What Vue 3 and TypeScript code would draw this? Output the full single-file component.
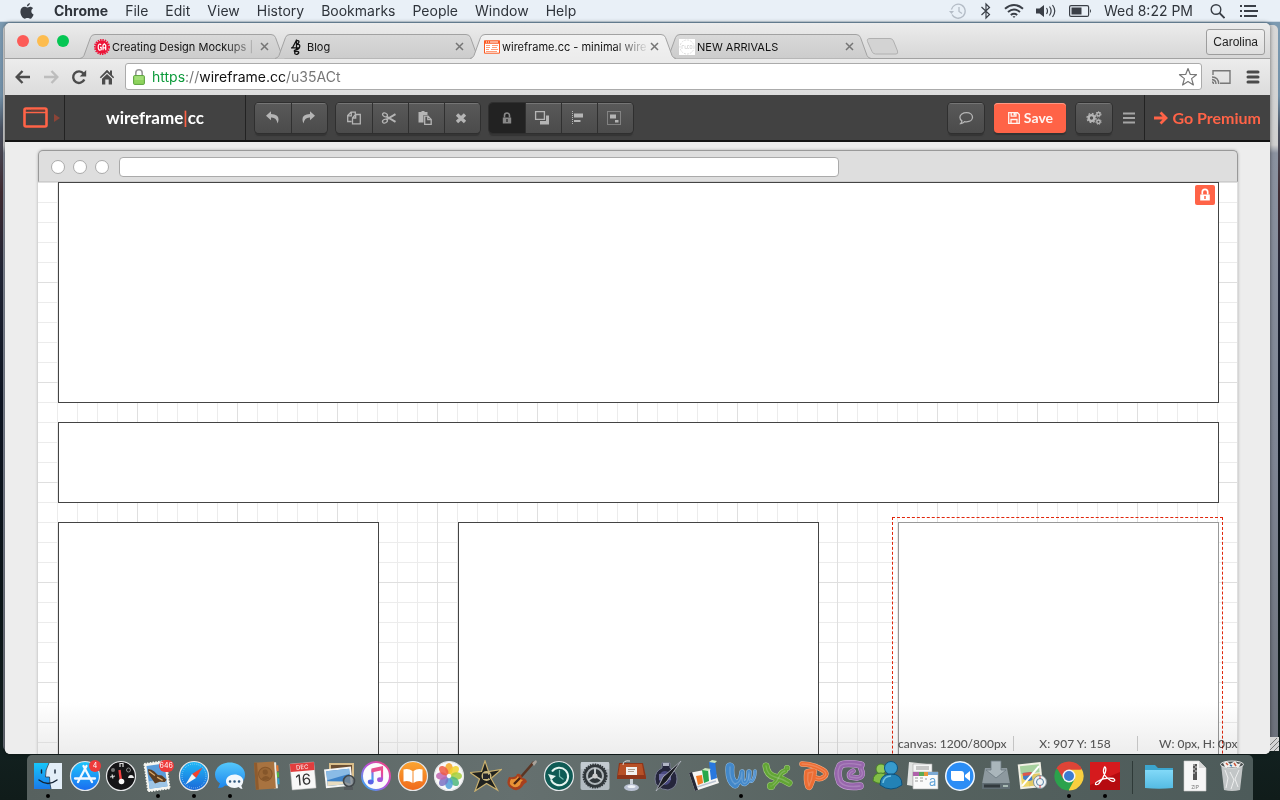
<script setup lang="ts">
interface Tab {
  title: string
  icon: string
  active?: boolean
}
interface Box {
  x: number
  y: number
  w: number
  h: number
  locked?: boolean
  selected?: boolean
}
interface DockItem {
  name: string
  art: string
  running?: boolean
  badge?: string
}

const menus = ['File', 'Edit', 'View', 'History', 'Bookmarks', 'People', 'Window', 'Help']

const tabs: Tab[] = [
  {
    title: 'Creating Design Mockups |',
    icon: '<circle cx="8" cy="8" r="6.6" fill="#ed1438"/><circle cx="8" cy="8" r="7.1" fill="none" stroke="#ed1438" stroke-width="1.8" stroke-dasharray="1.5 .9"/><path d="M7.2 5.600Q4.200 4 4.200 8T7.200 10.800V8.400H6M9 11.200V6.300L10.300 4.800 11.700 6.300v4.900M9 8.800h2.700" stroke="#fff" stroke-width="1.2" fill="none"/>',
  },
  {
    title: 'Blog',
    icon: '<path d="M7.500 .5V11M3.500 8.800L7.300 1.500M2 8.800H10M7.500 1.300Q10.800 1.500 9.600 3.800 9 5 7.500 5.200 11.500 5 10.600 8 10 10.500 6.500 10.800 4.800 11.500 5.600 12.500 10.500 12 9.600 14.200 8.500 16 6.300 15 5 13.800 6.500 12.800" stroke="#111" stroke-width="1.300" fill="none"/>',
  },
  {
    title: 'wireframe.cc - minimal wire',
    icon: '<path d="M.5 2h15v12.200H.5z" fill="#fff" stroke="#fb5a22"/><path d="M0 1.500h16v3.200H0z" fill="#fb5a22"/><path d="M2 3h1m1 0h1m1 0h8" stroke="#fff"/><path d="M2 6.500h4M8 6.500h6M2 8.500h4M8 8.500h5M2 10.500h3M7 10.500h7M2 12.500h11" stroke="#ff9c78"/>',
    active: true,
  },
  {
    title: 'NEW ARRIVALS',
    icon: '<path d="M0 0h16v16H0z" fill="#fff"/><circle cx="8" cy="8" r="7" fill="none" stroke="#ddd" stroke-dasharray="2 1"/><path d="M3 10V6.500h2M6 6.500V9.500h2M10 6.500H8.500v3H10M11 6.500h2v3h-2z" stroke="#ddd" fill="none"/>',
  },
]

const boxes: Box[] = [
  { x: 20, y: 0, w: 1161, h: 221, locked: true },
  { x: 20, y: 240, w: 1161, h: 81 },
  { x: 20, y: 340, w: 321, h: 321 },
  { x: 420, y: 340, w: 361, h: 321 },
  { x: 860, y: 340, w: 321, h: 321, selected: true },
]

const editGroups = [
  [
    { label: 'Undo', art: '<path d="M6 1.200L1 5.700 6 10.200V7.400Q11.400 7 12.600 13.400 16.200 4.200 6 4z"/>' },
    { label: 'Redo', art: '<path d="M10 1.200L15 5.700 10 10.200V7.400Q4.600 7 3.400 13.400-.2 4.200 10 4z"/>' },
  ],
  [
    {
      label: 'Copy',
      art: '<path d="M5.500 11.500H1.700V5.500L5 2.200h4.300V4M5.300 2.500v3.300H2M6.500 8l3-3.500h4.800v9.300H6.500zM9.700 4.800V8H6.800" fill="none" stroke="currentColor" stroke-width="1.300"/>',
    },
    {
      label: 'Cut',
      art: '<path d="M5.500 6.500L14.500 11.800M5.500 9.500L14.500 4.200" stroke="currentColor" stroke-width="2"/><ellipse cx="3.900" cy="4.900" rx="2.500" ry="1.800" fill="none" stroke="currentColor" stroke-width="1.300" transform="rotate(25 4 5)"/><ellipse cx="3.900" cy="11.100" rx="2.500" ry="1.800" fill="none" stroke="currentColor" stroke-width="1.300" transform="rotate(-25 4 11)"/>',
    },
    {
      label: 'Paste',
      art: '<path d="M1.500 2h3V1h3v1h3v3H6.500v7.500h-5z"/><path d="M7.700 6.200h3.300l3.200 3.200v5H7.700zM10.800 6.500v3.200H14" fill="none" stroke="currentColor" stroke-width="1.300"/>',
    },
    { label: 'Delete', art: '<path d="M4 4.500l8 7.500M12 4.500L4 12" stroke="currentColor" stroke-width="3.400"/>' },
  ],
  [
    {
      label: 'Lock',
      art: '<path d="M3.800 7.500h8.400v6H3.800z"/><path d="M5.500 7.500V5.500a2.500 2.500 0 015 0v2" fill="none" stroke="currentColor" stroke-width="1.600"/><path d="M8 9v3" stroke="#222" stroke-width="1.200"/>',
      active: true,
    },
    {
      label: 'Arrange',
      art: '<path d="M1.600 1.600h8.800v7.800H1.600z" fill="none" stroke="currentColor" stroke-width="1.300"/><path d="M12 5.500h3v9H6V11h6z"/>',
    },
    {
      label: 'Align',
      art: '<path d="M2.500 1v14" stroke="currentColor" stroke-dasharray="1 1"/><path d="M4 3.500h9v4H4zM4 10h6.500v2H4z"/>',
    },
    {
      label: 'Group',
      art: '<path d="M1.500 1.500h13v13h-13z" fill="none" stroke="currentColor" stroke-dasharray="1 1"/><path d="M4 4.500h6v4H4zM9 10h3.500v2.500H9z"/>',
    },
  ],
]

/* Glassy tube letter: each stroke is [path, width], edged in a paler tone. */
const tube = (strokes: [string, number][], fill: string, edge: string) =>
  `<g fill="none" stroke-linecap="round" stroke-linejoin="round">` +
  strokes.map(([d, w]) => `<path d="${d}" stroke="${edge}" stroke-width="${w + 1}"/>`).join('') +
  strokes.map(([d, w]) => `<path d="${d}" stroke="${fill}" stroke-width="${w}"/>`).join('') +
  strokes.map(([d]) => `<path d="${d}" stroke="#fff" stroke-opacity=".18" stroke-width="1.300"/>`).join('') +
  `</g>`

const petals = ['#f6a623', '#f2d22e', '#a5cf3c', '#4fb77d', '#4f9fd8', '#7a72c4', '#c065b0', '#ee5a45']
  .map((c, i) => `<ellipse cx="16" cy="8.500" rx="3.800" ry="5.500" fill="${c}" fill-opacity=".85" transform="rotate(${i * 45} 16 16)"/>`)
  .join('')

const ring = (fill: string) => `<circle cx="16" cy="16" r="14.500" fill="${fill}" stroke="#e4e6e8" stroke-width="1.200"/>`

const dockApps: DockItem[] = [
  {
    name: 'Finder',
    running: true,
    art: '<path d="M2 3h28v26H2z" fill="#e3eef8"/><path d="M2 3h15q-4 7-3.500 14h4q0 6 1.500 12H2z" fill="url(#g-finder)"/><path d="M17 3q-4 7-3.500 14h4q0 6 1.500 12" fill="none" stroke="#26384d" stroke-width=".8"/><path d="M9.500 10v3M23 10v3M7 20q9 7 18 0" fill="none" stroke="#132233" stroke-width="1.400" stroke-linecap="round"/>',
  },
  {
    name: 'App Store',
    badge: '4',
    art: ring('url(#g-blue)') + '<path d="M17.500 6L9 22M14.500 6L23 22M6 18.500h20" stroke="#f1f8ff" stroke-width="2.300" stroke-linecap="round"/>',
  },
  {
    name: 'Dashboard',
    art: ring('#151517') + '<path d="M14.500 10l1.500 11" stroke="#f24040" stroke-width="2.400"/><circle cx="16.500" cy="21.500" r="2.800" fill="#f7f7f7"/><path d="M15 7V3.500h3V7M5 17l5-1M7 14.500l1 4" stroke="#ddd" stroke-width="1.200" fill="none"/><circle cx="8" cy="10" r="2" fill="#777"/><circle cx="23.500" cy="10" r="2" fill="none" stroke="#888"/><path d="M23 18h6q-.5-3-3-3t-3 3z" fill="#eee"/>',
  },
  {
    name: 'Mail',
    running: true,
    badge: '646',
    art: '<g transform="rotate(-8 16 16)"><path d="M4 2h22v28H4z" fill="#f5f5f0" stroke="#f5f5f0" stroke-width="1.600" stroke-dasharray="1.600 1.200"/><path d="M6 4.500h18v23H6z" fill="#5b9cda"/><path d="M6 20h18v7.500H6z" fill="#9dc5e6"/><path d="M7 8q3 0 6 3l3 4 4 1 4 5-2 2-5-1-5 1-2-4-3-6z" fill="#5c3d20"/><path d="M8 10l5 5M15 17l5 4" stroke="#d9a968" stroke-width="1.300"/></g>',
  },
  {
    name: 'Safari',
    running: true,
    art: ring('url(#g-safari)') + '<circle cx="16" cy="16" r="12" fill="none" stroke="#bfe4fb" stroke-dasharray=".6 1.500"/><path d="M24.500 7.500L14 14l4 4z" fill="#f3432f"/><path d="M7.500 24.500L14 14l4 4z" fill="#f4f4f4"/>',
  },
  {
    name: 'Messages',
    running: true,
    art: '<path d="M16 2.500C7 2.500 1 8 1 14.500c0 4 2 7 5 9L4 28q5 0 7-2.500 20 2 20-11c0-7-7-12-15-12z" fill="url(#g-sky)"/><path d="M20.500 14.500c-5 0-8.500 3-8.500 6.800s3.500 6.700 8.500 6.700q2 0 4-1 2 2 4 2l-1.200-3.200c5-6.800-.8-11.300-6.800-11.300z" fill="#f2f7fc"/><path d="M16 21.500h.1M20.500 21.500h.1M25 21.500h.1" stroke="#31597f" stroke-width="2.500" stroke-linecap="round"/>',
  },
  {
    name: 'Contacts',
    art: '<g transform="rotate(-4 16 16)"><path d="M22 3h4v26h-4z" fill="#ecebe5"/><path d="M26 6h2v6h-2z" fill="#e8772e"/><path d="M26 13h2v5h-2z" fill="#55b83e"/><path d="M26 19h2v6h-2z" fill="#32a3cf"/><path d="M4 2h20v27H4z" fill="#a87340"/><path d="M4 2h3v27H4z" fill="#8e5b2d"/><circle cx="14.500" cy="14" r="6.800" fill="#9a6736" stroke="#85562a"/><circle cx="14.500" cy="12" r="2.600" fill="#85562a"/><path d="M10 18.500q4.500-5 9 0-4.500 3-9 0z" fill="#85562a"/></g>',
  },
  {
    name: 'Calendar',
    art: '<g transform="rotate(-5 16 16)"><path d="M4 3h24v26H4z" fill="#f8f8f8" stroke="#bbb" stroke-width=".5"/><path d="M4 3h24v8H4z" fill="#e23d3d"/><text x="16" y="9.200" font-size="6" fill="#fff" text-anchor="middle">DEC</text><text x="16" y="25" font-size="15" fill="#333" text-anchor="middle">16</text></g>',
  },
  {
    name: 'Preview',
    art: '<path d="M5 3h25v17H5z" fill="#d8bd8a"/><path d="M7 5h21v13H7z" fill="#6a4d32"/><g transform="rotate(-6 14 18)"><path d="M1 8h27v19H1z" fill="#f5f5f5"/><path d="M3 10h23v15H3z" fill="#3e83c9"/><path d="M3 10h23v5l-23 4z" fill="#8abbe6"/><path d="M3 20l16 2 7 3H3z" fill="#e9dcc0"/></g><circle cx="25" cy="21" r="5.500" fill="#7b848d" fill-opacity=".8" stroke="#42474b" stroke-width="1.600"/><path d="M20 27h9v3h-9z" fill="#54595c"/>',
  },
  {
    name: 'iTunes',
    art: '<circle cx="16" cy="16" r="14" fill="#fbfbfd" stroke="url(#g-itunes)" stroke-width="2"/><path d="M12.500 22V10.500l9.500-2v11" fill="none" stroke="url(#g-itunes)" stroke-width="2.200"/><path d="M11.500 8.500L23 6v4L11.500 12.500z" fill="#e8508f"/><ellipse cx="10.700" cy="22" rx="2.900" ry="2.400" fill="#5963e8"/><ellipse cx="20" cy="19.700" rx="2.900" ry="2.400" fill="#a058da"/>',
  },
  {
    name: 'iBooks',
    art: ring('url(#g-orange)') + '<path d="M15.500 11q-4-3-9-1.500v12q5-1.500 9 1.500zM16.500 11q4-3 9-1.500v12q-5-1.500-9 1.500z" fill="#fff"/>',
  },
  { name: 'Photos', art: ring('#f8f8f8') + petals },
  {
    name: 'iMovie',
    art: '<path d="M15 1l3.500 10.500 13-2-10.500 9 6.500 11.500-11-6.500L5 31l4.500-12L0 12.500l11.500-1z" fill="#20221f" stroke="#c9b06e" stroke-width="1.200"/><circle cx="16.500" cy="16" r="5" fill="#c9b77f"/><path d="M13 13.500h5v1.500l2-1v5l-2-1v1h-5z" fill="#25262a"/>',
  },
  {
    name: 'GarageBand',
    art: '<path d="M14 18L28 2" stroke="#5b3523" stroke-width="2.600"/><path d="M26 3l4-3 1 2-3 4z" fill="#aaa39b"/><path d="M3 17q-4 8 2 11 6 5 11-1 1-3 5-5-1-4-5-4-1-5-5-4-1 4-8 3z" fill="#a8401d"/><path d="M5 19q-3 5 1 7 4 3 8-1 0-3 3-5-4-1-5-4-2 4-7 3z" fill="#e89235"/><path d="M8 24l6-6" stroke="#4b2413" stroke-width="2.400"/>',
  },
  {
    name: 'Time Machine',
    art: ring('#0f5b55') + '<path d="M8 19.500a8.800 8.800 0 101-8" fill="none" stroke="#e5f4f0" stroke-width="2"/><path d="M5 14l3 6 5-4z" fill="#e5f4f0"/><path d="M16.500 10v6.500l4 3" stroke="#75b9ae" stroke-width="1.200" fill="none"/>',
  },
  {
    name: 'System Preferences',
    art: '<rect x="1.500" y="2" width="29" height="28" rx="2" fill="#b3bbc1"/><path d="M2 2h28v7H2z" fill="#cbd2d7" fill-opacity=".7"/><circle cx="16" cy="16" r="11.500" fill="#30363a"/><circle cx="16" cy="16" r="11.800" fill="none" stroke="#30363a" stroke-width="1.500" stroke-dasharray="1.500 1"/><circle cx="16" cy="16" r="8" fill="none" stroke="#afb6ba" stroke-width="2"/><path d="M16 16V8M16 16l7 4M16 16l-7 4" stroke="#c5cbce" stroke-width="2"/><circle cx="16" cy="16" r="2.600" fill="#ccc"/>',
  },
  {
    name: 'Keynote',
    art: '<path d="M15 18h3v9h-3z" fill="#c6ced5"/><ellipse cx="16.500" cy="27.500" rx="7.500" ry="3.500" fill="#b9c1d2"/><ellipse cx="16.500" cy="26.500" rx="4" ry="1.500" fill="#edf1f7"/><path d="M4 3h24l3 14v2H2v-2z" fill="#8e3519"/><path d="M5 4h22l2 11H3z" fill="#b75127"/><path d="M11 7h11v8H11z" fill="#f1f1ef"/><path d="M13 9.500h7M13 11.500h6" stroke="#ae9c8e"/><path d="M8 5q0-5 7-4" stroke="#ddd" fill="none"/>',
  },
  {
    name: 'Pages',
    art: '<path d="M10 3h8v5q7 3 7 11 0 9-9 11-13-1-13-11 0-8 7-11z" fill="#25263c" stroke="#777b91"/><path d="M11 3h6v3h-6z" fill="#b1b6c5"/><ellipse cx="13" cy="18" rx="6" ry="7" fill="#4b4a82"/><path d="M7 14h12v6H7z" fill="#6c6ba0"/><path d="M29 1L15 21 4 31l7-14z" fill="#1a1b22" stroke="#aeb2bb" stroke-width=".9"/>',
  },
  {
    name: 'Numbers',
    art: '<path d="M1 13l25-5 5 15-24 8z" fill="#f5f5f3"/><path d="M1 13l3-1 6 18-3 1z" fill="#242735"/><path d="M8 16l6-1 1 8-5 2z" fill="#f37b25"/><path d="M14 10l6-1 1 12-5 2z" fill="#27a84b"/><path d="M21 2l6-1 2 17-6 2z" fill="#2878df"/><path d="M14 10l3-2 6 1-3 2zM21 2l3-2 5 1-2 2z" fill="#cce6bd"/><path d="M9 27l19-6" stroke="#bac4d2" stroke-width="1.500"/>',
  },
  {
    name: 'Word',
    running: true,
    art: tube([['M5 7Q4 20 10 24', 8], ['M10 24Q16 23 17 12M17 14Q16 24 20 23.500 24 22 24 12', 4.5], ['M24 14Q23 23 27 21 30 18 30 11', 2.500]], '#4388c9', '#94bfe4'),
  },
  {
    name: 'Excel',
    art: tube([['M5 6Q6 15 14 17T28 23', 6], ['M12 25Q16 22 18 17T24 11', 4.500], ['M26 8h.1', 5], ['M10 26h.1', 7]], '#62a535', '#a5d080'),
  },
  {
    name: 'PowerPoint',
    art: tube([['M4 4Q14 4 23 9 31 13 26 17 22 20 18 18', 4.500], ['M10 13L15 12Q14 20 11 26Q9 20 10 13', 7]], '#ec6d33', '#f5b088'),
  },
  {
    name: 'Entourage',
    art: tube([['M27 5Q10 2 6 6 2 13 6 22 11 28 26 26', 6.500], ['M27 9Q31 17 23 18L16 17Q14 13 19 11', 4.500]], '#9766ac', '#c8a6d6'),
  },
  {
    name: 'Messenger',
    art: '<circle cx="10" cy="9" r="5" fill="#91c958" stroke="#477e28"/><path d="M2 21q0-8 8-8 6 0 7 8-7 5-15 0z" fill="#82bd47" stroke="#477e28"/><circle cx="20" cy="8" r="6.500" fill="#379bcd" stroke="#0d527d"/><path d="M9 25q0-11 11-11t11 11q-11 8-22 0z" fill="#2382b6" stroke="#0d527d"/><path d="M12 23q1-7 8-7" fill="none" stroke="#73c1e2" stroke-width="1.500"/>',
  },
  {
    name: 'Document Connection',
    art: '<path d="M2 2l18 2-2 24-18-3z" fill="#e1e3e2"/><path d="M6 4h19v24H6z" fill="#f4f5f5" stroke="#aaa" stroke-width=".6"/><path d="M6 12h25v17H6z" fill="#fafafa" stroke="#aaa" stroke-width=".6"/><path d="M6 12h6v4H6z" fill="#b063ab"/><path d="M12 12h5v4h-5z" fill="#5aaa54"/><path d="M17 12h4v4h-4z" fill="#e79639"/><path d="M21 12h10v3H21z" fill="#7ba9d4"/><text x="22" y="26" font-size="13" fill="#66a5d8">a</text><path d="M8 18h3M8 21h3M13 18h3M13 21h3M18 19h2M9 7h13M9 9h13" stroke="#999"/>',
  },
  {
    name: 'Zoom',
    art: '<circle cx="16" cy="16" r="15" fill="#f2f8ff"/><circle cx="16" cy="16" r="13.500" fill="#2c8df5"/><path d="M7 11h10q3 0 3 3v7H10q-3 0-3-3zM21 15l5-4v10l-5-4z" fill="#fff"/>',
  },
  {
    name: 'Installer',
    art: '<path d="M5 8h22l3 16H2z" fill="#8d999f"/><path d="M2 23h28v6H2z" fill="#606d73"/><path d="M4 24.500h16v3H4z" fill="#323a3e"/><path d="M11 1h10v9h5L16 18 6 10h5z" fill="#aab6bb" stroke="#6c7a81" stroke-width=".8"/><path d="M23 26h5" stroke="#c1d4ca" stroke-width="1.500"/>',
  },
  {
    name: 'Travel',
    art: '<g transform="rotate(-6 16 16)"><path d="M3 3h23v25H3z" fill="#f1f0e5"/><path d="M5 5h19v8H5z" fill="#a7d19f"/><path d="M5 13h8v13H5z" fill="#efd86b"/><path d="M12 14h12v12H12z" fill="#e2c965"/><path d="M7 12h9v8q-5 2-9-2z" fill="#457fc4"/><path d="M7 12h9v3H7z" fill="#de594b"/><path d="M5 25L24 7" stroke="#fff" stroke-width="2"/></g><circle cx="24" cy="22" r="6.500" fill="#f0f4f5" stroke="#829199"/><circle cx="24" cy="22" r="3.500" fill="none" stroke="#5681a6"/><path d="M24 16v3M24 25v3" stroke="#df4444"/>',
  },
  {
    name: 'Google Chrome',
    running: true,
    art: '<path d="M16 16L3.400 8.700A14.500 14.500 0 0128.600 8.700z" fill="#de4437"/><path d="M16 16L28.600 8.700A14.500 14.500 0 0116 30.500z" fill="#f9cf3f"/><path d="M16 16v14.500A14.500 14.500 0 013.400 8.700z" fill="#2ba24c"/><path d="M16 9.500h12.900L22 19.500z" fill="#f9cf3f"/><path d="M16 9.500h12.900L27 6H12z" fill="#de4437"/><path d="M10.400 19.200L4 8l7-2 5 3z" fill="#de4437"/><path d="M21.600 19.200L15.500 30.500l-6-12z" fill="#2ba24c"/><circle cx="16" cy="16" r="6.500" fill="#f3f5f6"/><circle cx="16" cy="16" r="5" fill="#3c7bd0"/>',
  },
  {
    name: 'Adobe Reader',
    running: true,
    art: '<path d="M1 2h30v28H1z" fill="#b60b10"/><path d="M1 2h30v10L1 25z" fill="#d51a1d"/><path d="M15.500 7c3 0 1 9-6 17-4 2-4-1-1-2.500 5-3 10-4 16-3 3 2 0 4-3 2-5-3-9-8-6-13.500z" fill="none" stroke="#fff" stroke-width="1.300"/>',
  },
]

const dockFiles: DockItem[] = [
  {
    name: 'Documents',
    art: '<path d="M2 5h10l3 3h15v20H2z" fill="#3ca6cf"/><path d="M2 10h28v18q-14 1.500-28 0z" fill="url(#g-folder)"/>',
  },
  {
    name: 'Archive',
    art: '<path d="M5 1h15l7 7v23H5z" fill="#f6f6f6" stroke="#ccc" stroke-width=".6"/><path d="M20 1v7h7z" fill="#d8d8d8"/><path d="M14 4h4v16h-4z" fill="#555"/><path d="M14 5h2M16 7h2M14 9h2M16 11h2M14 13h2" stroke="#ddd"/><text x="16" y="29" font-size="5" fill="#777" text-anchor="middle">ZIP</text>',
  },
  {
    name: 'Trash',
    art: '<path d="M5 4h22l-3 26q-8 2-16 0z" fill="#cfd2d3" fill-opacity=".9"/><ellipse cx="16" cy="4.500" rx="11.500" ry="3.500" fill="#4b5151" stroke="#e7e8e8"/><path d="M7 3l4-2 3 3 5-3 3 3 3-1-2 4H9z" fill="#f0efed"/><path d="M10 3l2 2M18 3l2 3" stroke="#ca573c" stroke-width="1.500"/><path d="M14 5l2 1" stroke="#3979ac" stroke-width="1.500"/><path d="M9 10l3 8-2 10M23 10l-4 9 3 8M14 12l4 8-3 9" fill="none" stroke="#f8f8f8" stroke-opacity=".8"/>',
  },
]
</script>

<template>
  <div class="desktop">
    <svg class="defs" width="0" height="0" aria-hidden="true">
      <defs>
        <linearGradient id="g-finder" x2="0" y2="1"><stop stop-color="#16c6fb" /><stop offset="1" stop-color="#1b7ae8" /></linearGradient>
        <linearGradient id="g-blue" x2="0" y2="1"><stop stop-color="#1ec6fb" /><stop offset="1" stop-color="#1a6cf0" /></linearGradient>
        <linearGradient id="g-safari" x2="0" y2="1"><stop stop-color="#1fb9f7" /><stop offset="1" stop-color="#1b67d8" /></linearGradient>
        <linearGradient id="g-sky" x2="0" y2="1"><stop stop-color="#55c8fb" /><stop offset="1" stop-color="#1c86ee" /></linearGradient>
        <linearGradient id="g-orange" x2="0" y2="1"><stop stop-color="#fba532" /><stop offset="1" stop-color="#f0691b" /></linearGradient>
        <linearGradient id="g-itunes" x1="1" x2="0" y2="1"><stop stop-color="#fb4476" /><stop offset=".5" stop-color="#b551dc" /><stop offset="1" stop-color="#22b8f8" /></linearGradient>
        <linearGradient id="g-folder" x2="0" y2="1"><stop stop-color="#82d9f8" /><stop offset="1" stop-color="#54bbe3" /></linearGradient>
        <linearGradient id="g-tab" x2="0" y2="1"><stop stop-color="#d9d9d9" /><stop offset="1" stop-color="#cccccc" /></linearGradient>
        <linearGradient id="g-tab-on" x2="0" y2="1"><stop stop-color="#f2f2f2" /><stop offset="1" stop-color="#ececec" /></linearGradient>
      </defs>
    </svg>

    <header class="menubar">
      <svg class="apple" viewBox="0 0 14 16" width="14" height="16"><path d="M9.900 0c.1 1.700-1.400 3.400-3 3.400C6.700 1.800 8.300.2 9.900 0zM7.200 4.500c.7 0 1.500-.8 3-.8 1 0 2.100.5 2.800 1.500-2.600 1.700-2 5.100.6 6.200-.6 1.800-2 4.300-3.400 4.300-1 0-1.400-.6-2.700-.6s-1.800.6-2.700.6C2.900 15.700.4 12.300.4 8.800.4 5.500 2.500 3.800 4.400 3.800c1.200 0 2 .7 2.800.7z" fill="#3a3f47" /></svg>
      <nav class="menus">
        <a href="#" class="app-name">Chrome</a>
        <a v-for="m in menus" :key="m" href="#">{{ m }}</a>
      </nav>
      <div class="tray">
        <svg width="20" height="18" viewBox="0 0 20 18" fill="none" stroke="#b4bcc6" stroke-width="1.300"><path d="M4 12.500a7 7 0 10-.6-5M11 5v4.500l3 2" /><path d="M1 9h5L3.500 12z" fill="#b4bcc6" stroke="none" /></svg>
        <svg width="12" height="18" viewBox="0 0 12 18" fill="none" stroke="#3a3f47" stroke-width="1.200"><path d="M1.500 5l8 7.500-3.500 3.500V2l3.500 3.500-8 7.500" /></svg>
        <svg width="20" height="18" viewBox="0 0 20 18" fill="none" stroke="#3a3f47" stroke-width="2"><path d="M1 6.700q9-7.500 18 0M4 10q6-5 12 0M6.800 13q3.200-2.500 6.400 0" /><path d="M8.500 14.200h3L10 16z" fill="#3a3f47" stroke="none" /></svg>
        <svg width="21" height="18" viewBox="0 0 21 18"><path d="M0 6.500h3.500L8 3v12l-4.500-3.500H0z" fill="#3a3f47" /><path d="M10.500 6q2 3 0 6M13.500 4.500q3.200 4.500 0 9M16.500 3q4.500 6 0 12" fill="none" stroke="#3a3f47" stroke-width="1.200" /></svg>
        <svg width="23" height="18" viewBox="0 0 23 18"><rect x=".6" y="3.600" width="19" height="10.800" rx="1.500" fill="none" stroke="#3a3f47" stroke-width="1.200" /><path d="M2.500 5.500h10v7h-10z" fill="#3a3f47" /><path d="M21 7q2 2 0 4z" fill="#3a3f47" /></svg>
        <span class="clock">Wed 8:22 PM</span>
        <svg width="15" height="18" viewBox="0 0 15 18" fill="none" stroke="#3a3f47"><circle cx="6" cy="7.500" r="4.800" stroke-width="1.400" /><path d="M9.500 11l5 5" stroke-width="1.800" /></svg>
        <svg class="list" width="18" height="18" viewBox="0 0 18 18" stroke="#3a3f47" stroke-width="2"><path d="M0 4h2M4 4h12M0 9h2M4 9h14M0 14h2M4 14h13" /></svg>
      </div>
    </header>

    <main class="stage">
      <div class="back-window"></div>
      <section class="browser">
        <div class="tabstrip">
          <div class="lights">
            <button class="light red" aria-label="Close"></button>
            <button class="light amber" aria-label="Minimise"></button>
            <button class="light green" aria-label="Zoom"></button>
          </div>
          <div v-for="t in tabs" :key="t.title" class="tab" :class="{ active: t.active }">
            <svg class="tab-shape" viewBox="0 0 206 25" width="206" height="25">
              <path
                d="M0 24.500Q3 24 4 21.500L10.500 3.500Q11.500.5 15 .5H191Q194.500.5 195.500 3.500L202 21.500Q203 24 206 24.500"
                :fill="t.active ? 'url(#g-tab-on)' : 'url(#g-tab)'"
                stroke="#a2a2a2"
              />
              <path v-if="t.active" d="M2 24.500H204" stroke="#ececec" />
            </svg>
            <svg class="favicon" width="16" height="16" viewBox="0 0 16 16" v-html="t.icon"></svg>
            <a href="#" class="tab-title">{{ t.title }}</a>
            <button class="tab-close" aria-label="Close tab">
              <svg width="9" height="9" viewBox="0 0 9 9"><path d="M1 1l7 7M8 1L1 8" stroke="#757575" stroke-width="1.500" /></svg>
            </button>
          </div>
          <button class="new-tab" aria-label="New tab">
            <svg width="34" height="17" viewBox="0 0 34 17"><path d="M4 .5H24Q26.500.5 27.500 3L31.500 13Q32.500 16 30 16H9.500Q7 16 6 13.500L1.500 3.500Q.5.5 4 .5z" fill="#d3d3d3" stroke="#b0b0b0" /></svg>
          </button>
          <button class="profile">Carolina</button>
        </div>

        <div class="navbar">
          <button aria-label="Back"><svg width="16" height="16" viewBox="0 0 16 16" fill="none" stroke="#4c4c4c" stroke-width="2.400"><path d="M15 8H2M7.500 2L1.700 8l5.800 6" /></svg></button>
          <button aria-label="Forward"><svg width="16" height="16" viewBox="0 0 16 16" fill="none" stroke="#bdbdbd" stroke-width="2.400"><path d="M1 8h13M8.500 2l5.800 6-5.800 6" /></svg></button>
          <button aria-label="Reload"><svg width="16" height="16" viewBox="0 0 16 16"><path d="M13.300 10.500a5.800 5.800 0 11-.8-6" fill="none" stroke="#4c4c4c" stroke-width="2.400" /><path d="M15.200 1v6.500H8.700z" fill="#4c4c4c" /></svg></button>
          <button aria-label="Home"><svg width="16" height="16" viewBox="0 0 16 16" fill="#4c4c4c"><path d="M8 .8L.8 8.200l1.100 1.100L8 3.400l6.100 5.900 1.100-1.100-2.200-2.300V1.500h-2v2.300z" /><path d="M3 9.700L8 5l5 4.700V15.500H9.700V10.500H6.300v5H3z" /></svg></button>
          <div class="address">
            <svg width="12" height="16" viewBox="0 0 12 16"><path d="M2.800 8V4a3.200 3.200 0 016.400 0v4" fill="none" stroke="#9a9a9a" stroke-width="1.600" /><rect x=".6" y="6.600" width="10.800" height="8.800" rx="1" fill="#8ed35d" stroke="#5aa13c" /><path d="M1.500 8h9M1.500 10h9" stroke="#b5e892" /></svg>
            <a href="#" class="url"><span class="scheme">https</span><span class="dim">://</span>wireframe.cc<span class="dim">/u35ACt</span></a>
            <svg class="star" width="20" height="20" viewBox="0 0 20 20"><path d="M10 1.500l2.300 6 6.200.2-4.900 3.900 1.800 6.400L10 14.500 4.600 18l1.800-6.400L1.500 7.700l6.200-.2z" fill="#fff" stroke="#777" stroke-width="1.200" stroke-linejoin="round" /></svg>
          </div>
          <button class="cast" aria-label="Cast"><svg width="20" height="16" viewBox="0 0 20 16" fill="none" stroke="#777" stroke-width="1.400"><path d="M2 6V1.700h17v12.600H9M1 13q1.500 0 1.500 2M1 10.500Q5 11 5 15M1 8q6.500 0 6.700 7" /></svg></button>
          <button aria-label="Menu"><svg width="14" height="14" viewBox="0 0 14 14"><path d="M2 2h10M2 7h10M2 12h10" stroke="#4a4a4a" stroke-width="3" stroke-linecap="round" /></svg></button>
        </div>

        <div class="appbar">
          <button class="device" aria-label="Device">
            <svg width="26" height="22" viewBox="0 0 26 22"><rect x="1.500" y="1.500" width="22" height="18" rx="1.500" fill="none" stroke="#ff6347" stroke-width="2.600" /><path d="M1 5.500h23" stroke="#ff6347" stroke-width="1.600" /><path d="M3 3.300h1M5.500 3.300h1M8 3.300h14" stroke="#803a2f" /></svg>
            <svg width="6" height="8" viewBox="0 0 6 8"><path d="M0 0l6 4-6 4z" fill="#8c4437" /></svg>
          </button>
          <h1 class="logo">wireframe<span>|</span>cc</h1>
          <div class="tools">
            <div v-for="(g, i) in editGroups" :key="i" class="group">
              <button v-for="b in g" :key="b.label" :aria-label="b.label" :class="{ pressed: 'active' in b }">
                <svg width="16" height="16" viewBox="0 0 16 16" fill="currentColor" v-html="b.art"></svg>
              </button>
            </div>
          </div>
          <div class="actions">
            <div class="group">
              <button aria-label="Comment"><svg width="16" height="16" viewBox="0 0 16 16"><path d="M8.500 2.700c3.500 0 6 2 6 4.600s-2.500 4.500-6 4.500q-1 0-2-.2-1.500 1.600-3.700 1.900 1-1.200 1.100-2.600-2-1.400-2-3.600c0-2.600 3-4.600 6.600-4.600z" fill="none" stroke="currentColor" stroke-width="1.300" /></svg></button>
            </div>
            <button class="save">
              <svg width="12" height="12" viewBox="0 0 12 12"><path d="M.7.700H9.500l1.800 1.800v8.800H.7zM3 11V7.500h6V11M3.200 1v3.200H8V1" fill="none" stroke="#fff3ef" stroke-width="1.300" /><path d="M5.500 1h2v2.500h-2z" fill="#fff3ef" /></svg>
              Save
            </button>
            <div class="group">
              <button aria-label="Settings"><svg width="16" height="16" viewBox="0 0 16 16" fill="none" stroke="currentColor"><circle cx="5.500" cy="8" r="2.900" stroke-width="2.400" /><circle cx="5.500" cy="8" r="4.500" stroke-width="1.300" stroke-dasharray="1.800 1.700" /><circle cx="12.500" cy="4.300" r="1.700" stroke-width="1.500" /><circle cx="12.500" cy="4.300" r="2.700" stroke-dasharray="1.100 1.300" /><circle cx="12.500" cy="11.700" r="1.700" stroke-width="1.500" /><circle cx="12.500" cy="11.700" r="2.700" stroke-dasharray="1.100 1.300" /></svg></button>
            </div>
            <button class="more" aria-label="More"><svg width="14" height="12" viewBox="0 0 14 12"><path d="M1 1.500h12M1 6h12M1 10.500h12" stroke="#a5a5a5" stroke-width="2" /></svg></button>
          </div>
          <a href="#" class="premium">
            <svg width="14" height="14" viewBox="0 0 14 14"><path d="M0 7h11M6.500 1.500L12 7l-5.500 5.500" fill="none" stroke="#ff6347" stroke-width="2.800" /></svg>
            Go Premium
          </a>
        </div>

        <div class="workspace">
          <div class="canvas">
            <div class="canvas-head">
              <i></i><i></i><i></i>
              <input class="canvas-url" type="text" aria-label="Mock address" />
            </div>
            <div class="grid">
              <div
                v-for="(b, i) in boxes"
                :key="i"
                class="box"
                :class="{ selected: b.selected }"
                :style="{ left: b.x + 'px', top: b.y + 'px', width: b.w + 'px', height: b.h + 'px' }"
              >
                <button v-if="b.locked" class="lock" aria-label="Unlock">
                  <svg width="12" height="14" viewBox="0 0 12 14"><path d="M1.200 6.500h9.600v6H1.200z" fill="#fff" /><path d="M3.300 6.500V4a2.700 2.700 0 015.400 0v2.500" fill="none" stroke="#fff" stroke-width="1.700" /><path d="M6 8v3" stroke="#ff6347" stroke-width="1.500" /></svg>
                </button>
              </div>
            </div>
          </div>
          <footer class="status">
            <div class="status-inner">
              <span>canvas: 1200/800px</span>
              <span class="pos">X: 907 Y: 158</span>
              <span class="size">W: 0px, H: 0px</span>
            </div>
          </footer>
        </div>
      </section>
      <svg class="resize" width="9" height="14" viewBox="0 0 9 14"><path d="M0 0h9v14H0z" fill="#d5d5d5" /><path d="M0 8l7-7M0 13L9 4M4 14l5-5" stroke="#777" /></svg>
    </main>

    <footer class="dock">
      <button v-for="d in dockApps" :key="d.name" class="dock-item" :class="{ running: d.running }" :aria-label="d.name">
        <svg width="32" height="32" viewBox="0 0 32 32" v-html="d.art"></svg>
        <span v-if="d.badge" class="badge">{{ d.badge }}</span>
      </button>
      <div class="dock-sep"></div>
      <button v-for="d in dockFiles" :key="d.name" class="dock-item" :aria-label="d.name">
        <svg width="32" height="32" viewBox="0 0 32 32" v-html="d.art"></svg>
      </button>
    </footer>
  </div>
</template>

<style>
body {
  margin: 0;
  overflow: hidden;
}
</style>

<style scoped>
* {
  box-sizing: border-box;
}
.desktop {
  display: flex;
  flex-direction: column;
  height: 100vh;
  font-family: Inter, 'Liberation Sans', sans-serif;
  background: linear-gradient(#7f9db4 0, #7290a8 12%, #4b5362 16%, #402b32 24%, #202536 34%, #0d1422 50%, #0b1518 75%, #12201f 94%, #101c1a 100%);
}
.defs {
  position: absolute;
}
button {
  display: flex;
  align-items: center;
  justify-content: center;
  padding: 0;
  border: 0;
  background: none;
  font: inherit;
}
a {
  color: inherit;
  text-decoration: none;
}
svg {
  flex: none;
}

/* menu bar */
.menubar {
  display: flex;
  align-items: center;
  height: 22px;
  padding: 0 22px 0 20px;
  font-size: 14px;
  color: #2f343b;
  background: #e9f0f7;
  border-bottom: 1px solid #cbd7e2;
}
.menus {
  display: flex;
  gap: 17px;
  margin-left: 20px;
}
.app-name {
  font-weight: 700;
}
.tray {
  display: flex;
  align-items: center;
  gap: 12px;
  margin-left: auto;
}
.clock {
  margin-right: 5px;
}
.list {
  margin-left: 3px;
}

/* browser window */
.stage {
  position: relative;
  flex: 1;
  min-height: 0;
  padding: 1px 10px 1px 5px;
}
.back-window {
  position: absolute;
  inset: 3px 2px 4px 3px;
  border-radius: 5px;
  background: linear-gradient(#d8d8d8 0, #cfcfcf 120px, #8b92a0 128px, #7e8594 60%, #6c717b 100%);
}
.resize {
  position: absolute;
  right: 1px;
  bottom: 4px;
}
.browser {
  position: relative;
  display: flex;
  flex-direction: column;
  height: 100%;
  overflow: hidden;
  border-radius: 5px;
  background: #ededed;
  box-shadow: 0 0 4px rgba(0, 0, 0, 0.5);
}
.tabstrip {
  display: flex;
  align-items: flex-end;
  height: 36px;
  background: linear-gradient(#ececec, #d6d6d6);
  box-shadow: inset 0 -1px #a2a2a2;
}
.lights {
  display: flex;
  gap: 8px;
  width: 75px;
  padding-left: 12px;
  align-self: center;
}
.light {
  width: 12px;
  height: 12px;
  border-radius: 50%;
}
.red {
  background: #fc5b57;
}
.amber {
  background: #fdbc4e;
}
.green {
  background: #05c653;
}
.tab {
  position: relative;
  display: flex;
  align-items: center;
  width: 195px;
  height: 25px;
  padding: 0 6px 0 14px;
}
.tab.active {
  z-index: 1;
}
.tab-shape {
  position: absolute;
  left: 0;
  top: 0;
}
.favicon,
.tab-title,
.tab-close {
  position: relative;
}
.tab-title {
  flex: 1;
  min-width: 0;
  margin: 0 4px 0 2px;
  white-space: nowrap;
  font-size: 11px;
  line-height: 16px;
  color: #111;
  -webkit-mask-image: linear-gradient(90deg, #000 112px, transparent 148px);
  mask-image: linear-gradient(90deg, #000 112px, transparent 148px);
}
.new-tab {
  height: 17px;
  margin: 0 0 4px 6px;
}
.profile {
  height: 26px;
  margin: 0 5px 4px auto;
  padding: 0 6px;
  border: 1px solid #9d9d9d;
  border-radius: 3px;
  font-family: 'Liberation Sans', sans-serif;
  font-size: 12px;
  color: #222;
  background: linear-gradient(#f0f0f0, #dedede);
}
.navbar {
  display: flex;
  align-items: center;
  gap: 12px;
  height: 36px;
  padding: 0 10px 1px;
  background: linear-gradient(#ececec, #dcdcdc);
}
.address {
  display: flex;
  flex: 1;
  align-items: center;
  gap: 7px;
  height: 27px;
  margin-left: -2px;
  padding: 0 3px 0 7px;
  border: 1px solid #ababab;
  border-radius: 3px;
  background: #fff;
}
.url {
  font-size: 14px;
  color: #111;
}
.scheme {
  color: #0b9a3a;
}
.dim {
  color: #777;
}
.star {
  margin-left: auto;
}
.cast {
  margin: 0 3px 0 -3px;
}

/* wireframe toolbar */
.appbar {
  display: flex;
  align-items: stretch;
  height: 47px;
  color: #b5b5b5;
  background: #424242;
  border-bottom: 2px solid #141414;
  font-family: Lato, 'Open Sans', sans-serif;
}
.device {
  gap: 5px;
  width: 60px;
  padding-left: 13px;
  border-right: 1px solid #222;
}
.logo {
  width: 181px;
  margin: 0;
  border-right: 1px solid #222;
  font-size: 17px;
  line-height: 46px;
  font-weight: 700;
  text-align: center;
  color: #fff;
}
.logo span {
  color: #ff6347;
}
.tools,
.actions {
  display: flex;
  align-items: center;
  gap: 9px;
  padding-left: 9px;
}
.actions {
  gap: 10px;
  margin-left: auto;
  padding-right: 8px;
}
.group {
  display: flex;
  overflow: hidden;
  border-radius: 4px;
  box-shadow: 0 0 0 1px #2f2f2f, 0 3px 1px #353535;
}
.group button {
  width: 36px;
  height: 30px;
  color: #b5b5b5;
  background: linear-gradient(#595959, #4b4b4b);
  box-shadow: inset 0 1px #757575;
}
.group button + button {
  padding-right: 3px;
  border-left: 1px solid #303030;
}
.group .pressed {
  color: #888;
  background: #222;
  box-shadow: none;
}
.save {
  gap: 4px;
  width: 72px;
  height: 30px;
  border-radius: 4px;
  font-size: 14px;
  font-weight: 700;
  color: #fff3ef;
  background: #ff6347;
  box-shadow: inset 0 1px #ff9884, 0 2px 1px #333;
}
.premium {
  display: flex;
  align-items: center;
  gap: 4px;
  padding: 0 9px 0 9px;
  border-left: 1px solid #222;
  font-size: 16px;
  font-weight: 700;
  color: #ff6347;
}

/* drawing area */
.workspace {
  position: relative;
  flex: 1;
  min-height: 0;
  overflow: hidden;
  background: #ededed;
}
.canvas {
  width: 1200px;
  margin: 8px auto 0;
  border-radius: 5px 5px 0 0;
  box-shadow: 0 0 3px #aaa;
}
.canvas-head {
  display: flex;
  align-items: center;
  gap: 8px;
  height: 32px;
  padding: 2px 0 0 12px;
  border: 1px solid #999;
  border-bottom-color: #ccc;
  border-radius: 5px 5px 0 0;
  background: #dedede;
}
.canvas-head i {
  width: 14px;
  height: 14px;
  border: 1px solid #aaa;
  border-radius: 50%;
  background: #fff;
}
.canvas-url {
  width: 720px;
  height: 20px;
  margin-left: 2px;
  border: 1px solid #aaa;
  border-radius: 4px;
  background: #fff;
}
.grid {
  position: relative;
  height: 800px;
  background-color: #fff;
  background-image: linear-gradient(90deg, transparent 99px, #dfdfdf 99px), linear-gradient(transparent 99px, #dfdfdf 99px),
    linear-gradient(90deg, transparent 19px, #ececec 19px), linear-gradient(transparent 19px, #ececec 19px);
  background-size: 100px 100px, 100px 100px, 20px 20px, 20px 20px;
  background-position: 0 1px, 0 1px, 0 1px, 0 1px;
}
.box {
  position: absolute;
  border: 1px solid #444;
  background: #fff;
}
.box.selected {
  border-color: #999;
}
.box.selected::after {
  content: '';
  position: absolute;
  inset: -6px -5px -6px -7px;
  border: 1px dashed #e0260c;
}
.lock {
  width: 20px;
  height: 20px;
  margin: 2px 3px 0 auto;
  border-radius: 2px;
  background: #ff6347;
}
.status {
  position: absolute;
  inset: auto 0 0;
  mix-blend-mode: multiply;
}
.status-inner {
  display: flex;
  justify-content: flex-end;
  width: 1200px;
  margin: 0 auto;
  padding: 34px 0 3px;
  font: 500 12px/15px Lato, 'Open Sans', sans-serif;
  color: #555;
  background: linear-gradient(#fff, #ededed);
}
.pos {
  width: 125px;
  margin-left: 6px;
  border: solid #c4c4c4;
  border-width: 0 1px;
  text-align: center;
}
.size {
  width: 100px;
  text-align: right;
}

/* dock */
.dock {
  position: relative;
  display: flex;
  height: 45px;
  margin: 0 27px;
  padding: 0 3px;
  border-radius: 5px 5px 0 0;
  background: linear-gradient(90deg, #57615f, #65706f 40%, #56625f 70%, #4d5b5a);
}
.dock-item {
  position: relative;
  flex: 1;
  align-items: flex-start;
  min-width: 0;
  padding-top: 5px;
}
.running::after {
  content: '';
  position: absolute;
  bottom: 2px;
  left: 50%;
  width: 4px;
  height: 4px;
  margin-left: -2px;
  border-radius: 50%;
  background: #000;
}
.badge {
  position: absolute;
  top: 5px;
  right: 2px;
  min-width: 12px;
  padding: 0 1px;
  border-radius: 6px;
  font-size: 7px;
  line-height: 12px;
  text-align: center;
  color: #fff;
  background: #ee3a3a;
}
.dock-sep {
  width: 17px;
  margin: 6px 0;
  background: linear-gradient(#2f3a38, #2f3a38) center / 1px 100% no-repeat;
}
</style>
